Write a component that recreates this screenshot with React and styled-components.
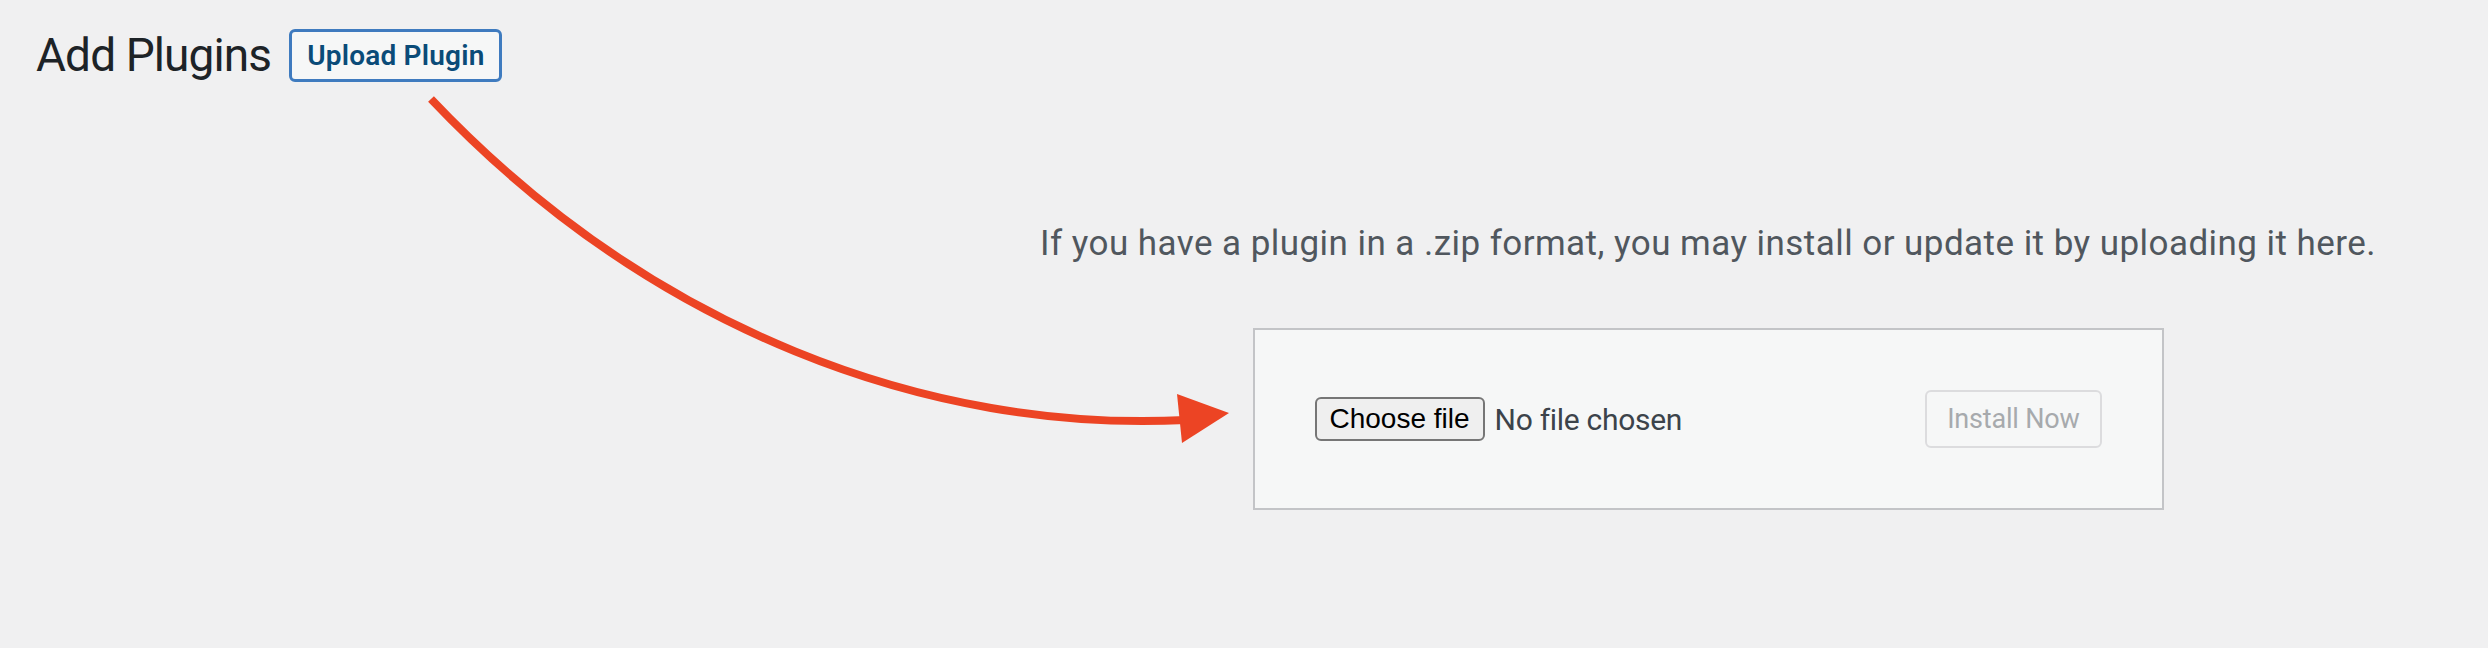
import styled, { createGlobalStyle } from "styled-components";

const GlobalStyle = createGlobalStyle`
  html, body {
    margin: 0;
    padding: 0;
    background: #f0f0f1;
  }
  body {
    font-family: Roboto, "Liberation Sans", sans-serif;
    color: #3c434a;
  }
`;

const Page = styled.div`
  position: relative;
  width: 2488px;
  height: 648px;
  overflow: hidden;
`;

const Header = styled.div`
  display: flex;
  align-items: center;
  gap: 18px;
  padding: 29px 0 0 36px;
`;

const Title = styled.h1`
  margin: 0;
  font-size: 46px;
  font-weight: 400;
  line-height: 53px;
  color: #1d2327;
  letter-spacing: -0.9px;
`;

const TitleAction = styled.button`
  box-sizing: border-box;
  height: 53px;
  padding: 0 15px;
  border: 3px solid #3f7bbf;
  border-radius: 6px;
  background: #f6f7f7;
  color: #0a4b78;
  font-family: Roboto, "Liberation Sans", sans-serif;
  font-size: 28px;
  font-weight: 600;
  letter-spacing: 0.2px;
  cursor: pointer;
`;

const UploadSection = styled.section`
  display: flex;
  flex-direction: column;
  align-items: center;
  margin-left: 928px;
  padding-top: 137px;
`;

const Help = styled.p`
  margin: 0;
  font-size: 35px;
  line-height: 49px;
  color: #50575e;
  letter-spacing: 0.45px;
`;

const UploadForm = styled.form`
  box-sizing: border-box;
  width: 911px;
  margin-top: 60px;
  padding: 60px;
  display: flex;
  justify-content: space-between;
  align-items: center;
  background: #f6f7f7;
  border: 2px solid #c3c4c7;
`;

const FileField = styled.div`
  display: flex;
  align-items: center;
  gap: 10px;
`;

const ChooseButton = styled.button`
  box-sizing: border-box;
  height: 44px;
  padding: 0 13px;
  border: 2px solid #767676;
  border-radius: 6px;
  background: #efefef;
  color: #000;
  font-family: "Liberation Sans", Arial, sans-serif;
  font-size: 28px;
`;

const FileName = styled.span`
  font-size: 30px;
  color: #3c434a;
  letter-spacing: -0.3px;
`;

const InstallButton = styled.button`
  box-sizing: border-box;
  height: 58px;
  padding: 0 20px;
  border: 2px solid #dcdcde;
  border-radius: 6px;
  background: #f6f7f7;
  color: #a7aaad;
  font-family: Roboto, "Liberation Sans", sans-serif;
  font-size: 27px;
  letter-spacing: -0.2px;
`;

const ArrowLayer = styled.svg`
  position: absolute;
  top: 0;
  left: 0;
  pointer-events: none;
`;

const Arrow = () => (
  <ArrowLayer width="2488" height="648" viewBox="0 0 2488 648">
    <path
      d="M431 99 C 651 331, 930 433, 1186 420"
      fill="none"
      stroke="#ec4424"
      strokeWidth="8"
    />
    <polygon points="1177,394 1229,413 1182,443" fill="#ec4424" />
  </ArrowLayer>
);

export default function App() {
  return (
    <Page>
      <GlobalStyle />
      <Header>
        <Title>Add Plugins</Title>
        <TitleAction type="button">Upload Plugin</TitleAction>
      </Header>
      <UploadSection>
        <Help>
          If you have a plugin in a .zip format, you may install or update it by uploading it here.
        </Help>
        <UploadForm onSubmit={(e) => e.preventDefault()}>
          <FileField>
            <ChooseButton type="button">Choose file</ChooseButton>
            <FileName>No file chosen</FileName>
          </FileField>
          <InstallButton type="submit" disabled>
            Install Now
          </InstallButton>
        </UploadForm>
      </UploadSection>
      <Arrow />
    </Page>
  );
}
